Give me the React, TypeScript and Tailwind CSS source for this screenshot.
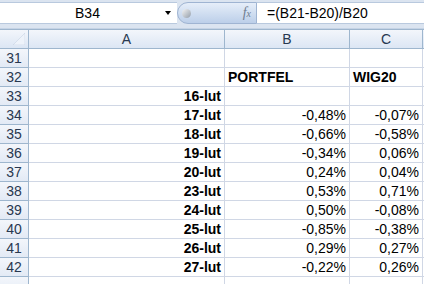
const rows: { n: number; a?: string; b?: string; c?: string; head?: boolean }[] = [
  { n: 31 },
  { n: 32, b: 'PORTFEL', c: 'WIG20', head: true },
  { n: 33, a: '16-lut' },
  { n: 34, a: '17-lut', b: '-0,48%', c: '-0,07%' },
  { n: 35, a: '18-lut', b: '-0,66%', c: '-0,58%' },
  { n: 36, a: '19-lut', b: '-0,34%', c: '0,06%' },
  { n: 37, a: '20-lut', b: '0,24%', c: '0,04%' },
  { n: 38, a: '23-lut', b: '0,53%', c: '0,71%' },
  { n: 39, a: '24-lut', b: '0,50%', c: '-0,08%' },
  { n: 40, a: '25-lut', b: '-0,85%', c: '-0,38%' },
  { n: 41, a: '26-lut', b: '0,29%', c: '0,27%' },
  { n: 42, a: '27-lut', b: '-0,22%', c: '0,26%' },
];

const hdr = 'bg-gradient-to-b from-[#f3f6fb] to-[#dce6f4] border-r border-b border-[#9eb6ce] text-[#283850]';
const cell = 'border-r border-b border-[#d0d7e5] h-[19px] px-[3px] flex items-center whitespace-nowrap';

export default function App() {
  return (
    <div className="w-[424px] h-[284px] overflow-hidden bg-white font-['Liberation_Sans',Arial,sans-serif] text-black">
      {/* Formula bar */}
      <div className="h-[29px] bg-[#dbe4f0] flex pt-[2px] pb-[4px] border-b border-[#c5d3e5]">
        <div className="w-[177px] bg-white border-y border-[#b9c9de] flex items-center">
          <span className="flex-1 text-center text-[14px] pl-[10px] pt-[1px]">B34</span>
          <span className="mr-[6px] w-0 h-0 border-l-[3.5px] border-r-[3.5px] border-t-[4px] border-l-transparent border-r-transparent border-t-black" />
        </div>
        {/* grip + fx */}
        <div className="w-[80px] flex items-center rounded-l-[11px] bg-gradient-to-b from-[#e6eef9] to-[#bccfe9] border border-[#9fb4d2]">
          <span className="ml-[4px] w-[9px] h-[9px] rounded-full bg-gradient-to-br from-[#f4f4f4] to-[#949eaa]" />
          <span className="ml-auto mr-[5px] font-['Liberation_Serif',serif] italic text-[#6f7d8f] text-[14px] leading-none">
            f<span className="text-[10px]">x</span>
          </span>
        </div>
        <div className="flex-1 bg-white border-y border-[#b9c9de] flex items-center pl-[10px] text-[14px] pt-[1px]">
          =(B21-B20)/B20
        </div>
      </div>

      {/* Grid */}
      <div className="grid grid-cols-[29px_196px_125px_73px_1fr]">
        {/* header row */}
        <div className={`${hdr} h-[20px] border-t border-t-[#9eb6ce] relative`}>
          <svg className="absolute right-[3px] bottom-[3px]" width="12" height="12" viewBox="0 0 12 12">
            <polygon points="12,0 12,12 0,12" fill="#eef3fa" stroke="#c2cfe0" strokeWidth="0.5" />
          </svg>
        </div>
        {['A', 'B', 'C', ''].map((l) => (
          <div key={l} className={`${hdr} h-[20px] border-t border-t-[#9eb6ce] flex items-center justify-center text-[14px]`}>
            {l}
          </div>
        ))}

        {rows.map((r) => (
          <div key={r.n} className="contents">
            <div className={`${hdr} bg-gradient-to-b from-[#e9eff8] to-[#e3eaf5] h-[19px] flex items-center justify-center text-[14px] pt-[1px]`}>
              {r.n}
            </div>
            <div className={`${cell} justify-end font-bold text-[14px]`}>{r.a}</div>
            <div className={`${cell} ${r.head ? 'justify-start font-bold' : 'justify-end'} text-[14px]`}>{r.b}</div>
            <div className={`${cell} ${r.head ? 'justify-start font-bold' : 'justify-end'} text-[14px]`}>{r.c}</div>
            <div className={cell} />
          </div>
        ))}

        {/* partial row below */}
        <div className={`${hdr} bg-gradient-to-b from-[#e9eff8] to-[#e3eaf5] h-[19px]`} />
        <div className={cell} />
        <div className={cell} />
        <div className={cell} />
        <div className={cell} />
      </div>
    </div>
  );
}
